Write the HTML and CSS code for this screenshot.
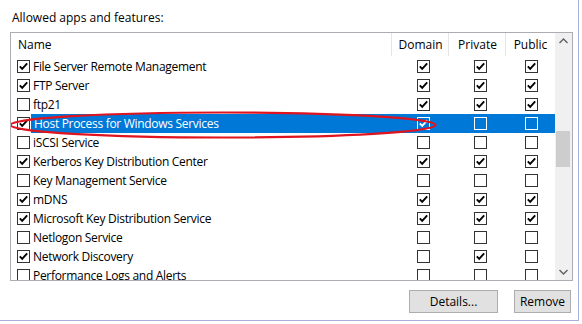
FILE: index.html
```html
<!DOCTYPE html>
<html>
<head>
<meta charset="utf-8">
<link rel="stylesheet" href="styles.css">
</head>
<body>
<div class="panel">
  <div class="title">Allowed apps and features:</div>
  <div class="listbox">
    <div class="list">
      <div class="row head">
        <div class="c name">Name</div>
        <div class="c col">Domain</div>
        <div class="c col">Private</div>
        <div class="c col last">Public</div>
      </div>
      <div class="rows" id="rows"></div>
    </div>
    <div class="scrollbar">
      <svg class="arrow" width="17" height="17" viewBox="0 0 17 17"><path d="M4.5 10 L8.5 6 L12.5 10" fill="none" stroke="#606060" stroke-width="1.4"/></svg>
      <div class="track"><div class="thumb"></div></div>
      <svg class="arrow" width="17" height="17" viewBox="0 0 17 17"><path d="M4.5 7 L8.5 11 L12.5 7" fill="none" stroke="#606060" stroke-width="1.4"/></svg>
    </div>
    <svg class="ring" width="428" height="28" viewBox="0 0 428 28"><ellipse cx="214" cy="14" rx="212.5" ry="12.5" fill="none" stroke="#e0141e" stroke-width="2.2"/></svg>
  </div>
  <div class="buttons">
    <div class="btn details">Details...</div>
    <div class="btn remove">Remove</div>
  </div>
</div>
<script src="app.js"></script>
</body>
</html>
```
FILE: app.js
```js
const data = [
  ["File Server Remote Management",1,1,1,1],
  ["FTP Server",1,1,1,1],
  ["ftp21",0,1,1,1],
  ["Host Process for Windows Services",1,1,0,0,true],
  ["iSCSI Service",0,0,0,0],
  ["Kerberos Key Distribution Center",1,1,1,1],
  ["Key Management Service",0,0,0,0],
  ["mDNS",1,1,1,1],
  ["Microsoft Key Distribution Service",1,1,1,1],
  ["Netlogon Service",0,0,0,0],
  ["Network Discovery",1,0,1,0],
  ["Performance Logs and Alerts",0,0,0,0]
];
const check = '<svg width="13" height="13" viewBox="0 0 13 13"><path d="M2.8 6.3 L5.2 8.8 L10.2 3.3" fill="none" stroke="currentColor" stroke-width="1.9"/></svg>';
const box = on => '<span class="cb">' + (on ? check : '') + '</span>';
const rows = document.getElementById('rows');
rows.innerHTML = data.map(d =>
  '<div class="row' + (d[5] ? ' sel' : '') + '">' +
  '<div class="c name">' + box(d[1]) + '<span class="lbl">' + d[0] + '</span></div>' +
  '<div class="c col">' + box(d[2]) + '</div>' +
  '<div class="c col">' + box(d[3]) + '</div>' +
  '<div class="c col last">' + box(d[4]) + '</div>' +
  '</div>').join('');
```
FILE: styles.css
```css
html, body { margin: 0; padding: 0; background: #fff; }
body { font-family: "Open Sans", "Noto Sans", sans-serif; font-size: 12px; color: #000; }
.panel {
  width: 578px; height: 320px;
  border-right: 1px solid #aab0dc; border-bottom: 1px solid #aab0dc;
  position: relative;
}
.title { padding: 10px 0 0 12px; height: 24px; line-height: 16px; box-sizing: border-box; }
.listbox {
  margin: 8px 0 0 10px; width: 563px; height: 249px; box-sizing: border-box;
  border: 1px solid #abadb3; display: flex; position: relative; overflow: hidden;
}
.list { width: 544px; overflow: hidden; }
.row { display: flex; height: 19px; align-items: center; }
.row.head { height: 23px; margin-bottom: 1px; }
.c { height: 100%; display: flex; align-items: center; box-sizing: border-box; }
.c.name { width: 380px; padding-left: 6px; }
.head .c.name { padding-left: 7px; }
.c.col { width: 57px; justify-content: center; padding-left: 8px; }
.c.col.last { width: 50px; padding-left: 2px; }
.head .c.col { border-left: 1px solid #e5e5e5; padding-left: 1px; }
.head .c.col.last { padding-left: 0; }
.cb {
  width: 13px; height: 13px; box-sizing: border-box; border: 1px solid #333;
  background: #fff; color: #000; display: inline-block; flex: none;
}
.cb svg { display: block; margin: -1px; }
.lbl { margin-left: 3px; white-space: nowrap; letter-spacing: -0.3px; }
.sel .c.name .lbl { background: #0078d7; color: #fff; flex: 1; height: 100%; display: flex; align-items: center; padding-left: 3px; margin-left: 1px; }
.sel .c.col { background: #0078d7; }
.sel .c.col.last { margin-right: -1px; }
.sel .c.col .cb { background: transparent; border-color: #fff; color: #fff; }
.scrollbar { width: 17px; background: #f0f0f0; display: flex; flex-direction: column; }
.arrow { display: block; flex: none; }
.track { flex: 1; padding: 81px 2px 0 1px; }
.thumb { height: 36px; background: #cdcdcd; }
.ring { position: absolute; left: -2px; top: 78px; }
.buttons { display: flex; justify-content: flex-end; gap: 16px; margin: 9px 7px 0 0; }
.btn {
  height: 23px; box-sizing: border-box; border: 1px solid #adadad; background: #e1e1e1;
  display: flex; align-items: center; justify-content: center;
}
.details { width: 89px; }
.remove { width: 57px; }
```
